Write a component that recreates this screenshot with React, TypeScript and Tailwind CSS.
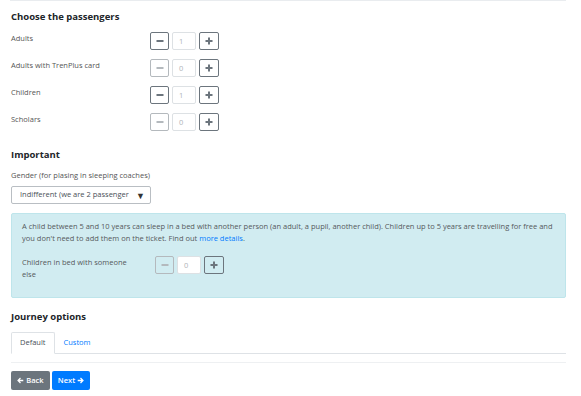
import { useState } from 'react';

type Counter = { id: string; label: string; value: number };

const PASSENGERS: Counter[] = [
  { id: 'adults', label: 'Adults', value: 1 },
  { id: 'trenplus', label: 'Adults with TrenPlus card', value: 0 },
  { id: 'children', label: 'Children', value: 1 },
  { id: 'scholars', label: 'Scholars', value: 0 },
];

function MinusIcon() {
  return (
    <svg width="8" height="8" viewBox="0 0 8 8">
      <rect x="0.5" y="3" width="7" height="2" fill="currentColor" />
    </svg>
  );
}

function PlusIcon() {
  return (
    <svg width="8" height="8" viewBox="0 0 8 8">
      <rect x="0.5" y="3" width="7" height="2" fill="currentColor" />
      <rect x="3" y="0.5" width="2" height="7" fill="currentColor" />
    </svg>
  );
}

function Stepper({ value, onChange }: { value: number; onChange: (v: number) => void }) {
  const canDec = value > 0;
  return (
    <div className="flex items-center gap-[3px] h-[18px]">
      <button
        onClick={() => canDec && onChange(value - 1)}
        className={
          canDec
            ? 'w-[19px] h-[18px] flex items-center justify-center border border-[#6c757d] rounded-[2px] text-[#6c757d]'
            : 'w-[19px] h-[18px] flex items-center justify-center border border-[#b4b9bd] rounded-[2px] text-[#b4b9bd]'
        }
      >
        <MinusIcon />
      </button>
      <div className="w-[24px] h-[18px] border border-[#dde1e4] rounded-[2px] bg-white text-[7.5px] leading-[16px] text-[#b0b4b8] pl-[6px]">
        {value}
      </div>
      <button
        onClick={() => onChange(value + 1)}
        className="w-[20px] h-[18px] flex items-center justify-center border border-[#6c757d] rounded-[2px] text-[#6c757d]"
      >
        <PlusIcon />
      </button>
    </div>
  );
}

function TabButton({ active, label, onClick }: { active: boolean; label: string; onClick: () => void }) {
  return (
    <button
      onClick={onClick}
      className={
        active
          ? 'h-[22px] px-[8px] -mb-px border border-[#dee2e6] border-b-white rounded-t-[2px] bg-white text-[7.5px] text-[#495057]'
          : 'h-[22px] px-[8px] -mb-px border border-transparent text-[7.5px] text-[#007bff]'
      }
    >
      {label}
    </button>
  );
}

export default function App() {
  const [counts, setCounts] = useState<Record<string, number>>(
    Object.fromEntries(PASSENGERS.map((p) => [p.id, p.value]))
  );
  const [bed, setBed] = useState(0);
  const [tab, setTab] = useState('default');

  return (
    <div className="w-[581px] h-[396px] overflow-hidden bg-white pl-[11px] pr-[15px] font-['Open_Sans',sans-serif] text-[#212529]">
      <div className="border-t border-[#e9ecef] -ml-[1px]" />

      <h2 className="mt-[9px] text-[9.5px] leading-[14px] font-bold">Choose the passengers</h2>

      <div className="mt-[8px] flex flex-col gap-[9px]">
        {PASSENGERS.map((p) => (
          <div key={p.id} className="flex">
            <div className="w-[139px] text-[7.5px] leading-[12px] text-[#555]">{p.label}</div>
            <Stepper
              value={counts[p.id]}
              onChange={(v) => setCounts({ ...counts, [p.id]: v })}
            />
          </div>
        ))}
      </div>

      <h2 className="mt-[17px] text-[9.5px] leading-[14px] font-bold">Important</h2>

      <div className="mt-[7px] text-[7.5px] leading-[12px] text-[#555]">Gender (for plasing in sleeping coaches)</div>
      <div className="mt-[5px] w-[140px] h-[18px] border border-[#b9bec3] rounded-[2px] flex items-center justify-between pl-[8px] pr-[5px] overflow-hidden">
        <span className="text-[7.5px] text-[#495057] whitespace-nowrap overflow-hidden">Indifferent (we are 2 passenger</span>
        <span className="text-[9px] leading-none text-[#333] ml-[4px]">▼</span>
      </div>

      <div className="mt-[9px] h-[85px] bg-[#d1ecf1] border border-[#bee5eb] rounded-[2px] pl-[10px] pr-[10px] pt-[6px] text-[7.5px] leading-[12px] text-[#55595c]">
        <p>
          A child between 5 and 10 years can sleep in a bed with another person (an adult, a pupil, another child). Children up to 5 years are travelling for free and you don&apos;t need to add them on the ticket. Find out{' '}
          <a className="text-[#007bff]">more details</a>.
        </p>
        <div className="mt-[12px] flex">
          <div className="w-[112px] mr-[21px]">Children in bed with someone else</div>
          <Stepper value={bed} onChange={setBed} />
        </div>
      </div>

      <h2 className="mt-[12px] text-[9.5px] leading-[14px] font-bold">Journey options</h2>

      <div className="mt-[8px] flex border-b border-[#dee2e6] h-[22px]">
        <TabButton active={tab === 'default'} label="Default" onClick={() => setTab('default')} />
        <TabButton active={tab === 'custom'} label="Custom" onClick={() => setTab('custom')} />
      </div>

      <div className="mt-[8px] border-t border-[#eef0f2]" />

      <div className="mt-[8px] flex gap-[2px]">
        <button className="h-[19px] w-[39px] flex items-center justify-center gap-[2px] rounded-[2px] bg-[#6c757d] text-white text-[7.5px] font-semibold">
          <svg width="7" height="7" viewBox="0 0 10 10">
            <path d="M5 1.5 L1.5 5 L5 8.5 M1.5 5 H9" stroke="currentColor" strokeWidth="1.8" fill="none" />
          </svg>
          Back
        </button>
        <button className="h-[19px] w-[38px] flex items-center justify-center gap-[2px] rounded-[2px] bg-[#007bff] text-white text-[7.5px] font-semibold">
          Next
          <svg width="7" height="7" viewBox="0 0 10 10">
            <path d="M5 1.5 L8.5 5 L5 8.5 M8.5 5 H1" stroke="currentColor" strokeWidth="1.8" fill="none" />
          </svg>
        </button>
      </div>
    </div>
  );
}
